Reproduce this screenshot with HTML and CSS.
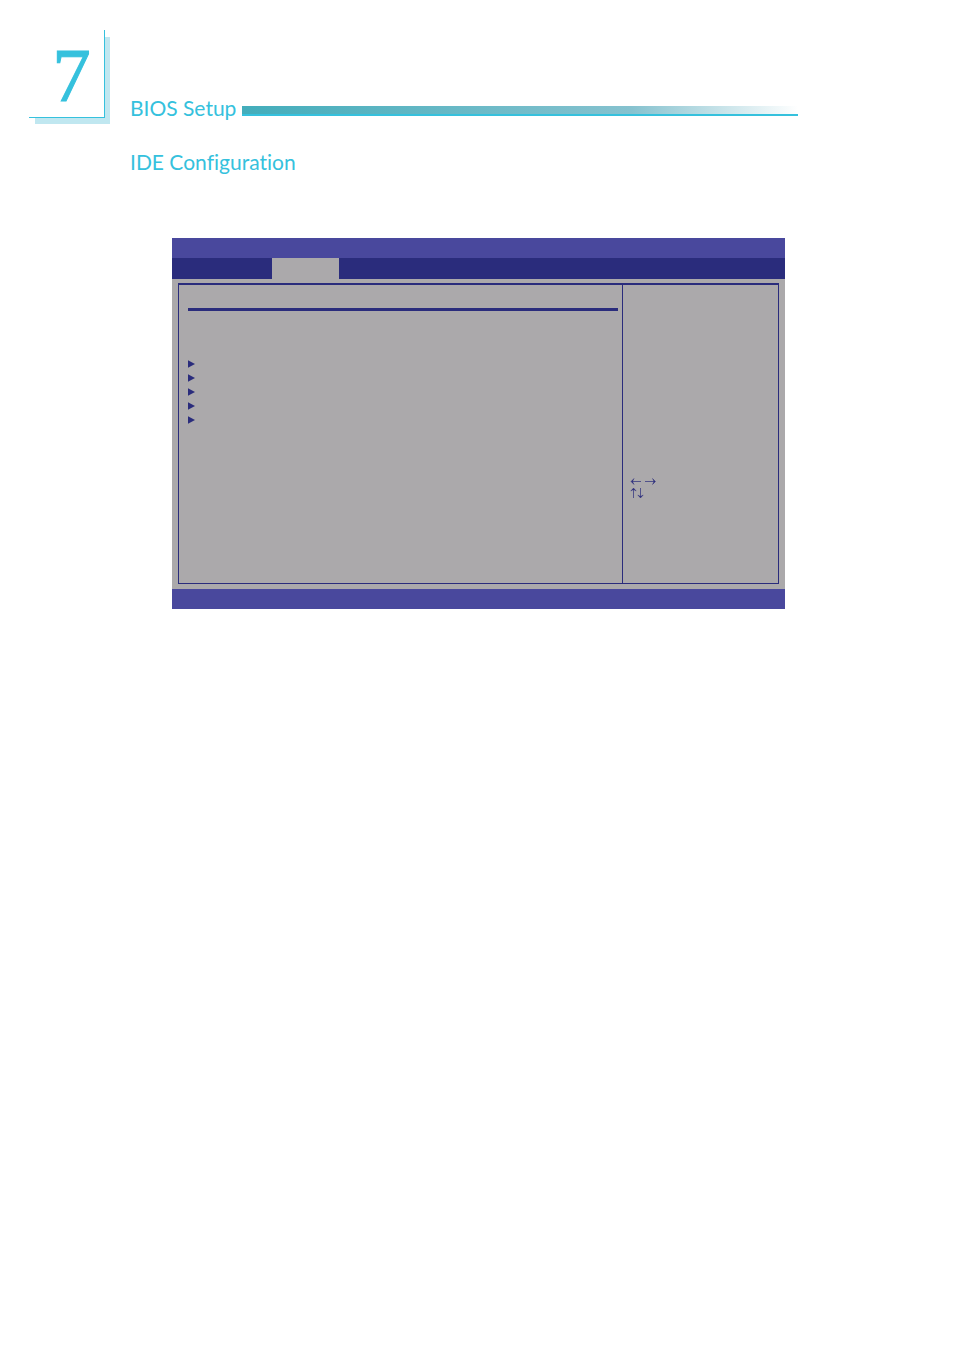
FILE: index.html
```html
<!DOCTYPE html>
<html lang="en">
<head>
<meta charset="utf-8">
<title>BIOS Setup</title>
<link rel="stylesheet" href="styles.css">
</head>
<body>
<header class="page-header">
  <div class="chapter">7</div>
  <div class="running-head">
    <h1 class="heading">BIOS Setup</h1>
    <div class="bar"></div>
  </div>
</header>
<main class="content">
  <h2 class="heading">IDE Configuration</h2>
  <section class="bios">
    <div class="bios-strip"></div>
    <div class="bios-tabs"><div class="tab-active"></div></div>
    <div class="bios-body">
      <div class="frame">
        <div class="options">
          <div class="rule"></div>
          <ul class="markers">
            <li><svg class="marker" viewBox="0 0 7 8"><path d="M0 0.3L7 4L0 7.7Z"/></svg></li>
            <li><svg class="marker" viewBox="0 0 7 8"><path d="M0 0.3L7 4L0 7.7Z"/></svg></li>
            <li><svg class="marker" viewBox="0 0 7 8"><path d="M0 0.3L7 4L0 7.7Z"/></svg></li>
            <li><svg class="marker" viewBox="0 0 7 8"><path d="M0 0.3L7 4L0 7.7Z"/></svg></li>
            <li><svg class="marker" viewBox="0 0 7 8"><path d="M0 0.3L7 4L0 7.7Z"/></svg></li>
          </ul>
        </div>
        <aside class="help">
          <svg class="keys" viewBox="0 0 28 24">
            <path class="shaft" d="M2 5.5H11M15 5.5H24M3.500 13V22M10.500 12V21"/>
            <path class="head" d="M4 2.500L2.500 5.500L4 8.500L1 5.500ZM22.500 2.500L24 5.500L22.500 8.500L25.500 5.500ZM0.800 15L3.500 13.500L6.200 15L3.500 12ZM7.800 19L10.500 20.500L13.200 19L10.500 22Z"/>
          </svg>
        </aside>
      </div>
    </div>
    <div class="bios-strip"></div>
  </section>
</main>
</body>
</html>
```
FILE: styles.css
```css
* {
  box-sizing: border-box;
}

body {
  margin: 0;
  background: #fff;
  color: #35c1dd;
  font-family: "Gill Sans", Lato, sans-serif;
}

.page-header {
  display: flex;
  gap: 25px;
  padding: 30px 156px 0 29px;
}

.chapter {
  position: relative;
  flex: none;
  width: 76px;
  height: 88px;
  padding-left: 10px;
  border-right: 1px solid #35c1dd;
  border-bottom: 1px solid #35c1dd;
  background: #fff;
  font: 77px/90px "Liberation Serif", serif;
  text-align: center;
  -webkit-text-stroke: 1px #35c1dd;
}

.chapter::before,
.chapter::after {
  content: "";
  position: absolute;
  background: #c0e7f0;
}

.chapter::before {
  top: 7px;
  right: -6px;
  bottom: -7px;
  width: 5px;
}

.chapter::after {
  right: -6px;
  bottom: -7px;
  left: 6px;
  height: 6px;
}

.running-head {
  display: flex;
  flex: 1;
  gap: 6px;
  align-items: flex-end;
}

.heading {
  margin: 0;
  font-size: 21px;
  font-weight: 400;
  line-height: 20px;
  font-variant-ligatures: none;
}

.bar {
  flex: 1;
  height: 10px;
  margin-bottom: 2px;
  border-bottom: 2px solid #35c1dd;
  background: linear-gradient(to right, #43adbb, #86c2cf 70%, #fff);
}

.content {
  padding: 34px 169px 0 130px;
}

.bios {
  margin: 66px 0 0 42px;
}

.bios-strip {
  height: 20px;
  background: #49489d;
}

.bios-tabs {
  height: 21px;
  padding-left: 100px;
  background: #2a2c7c;
}

.tab-active {
  width: 67px;
  height: 100%;
  background: #aba9ab;
}

.bios-body {
  padding: 4px 6px 5px;
  background: #aba9ab;
}

.frame {
  display: flex;
  min-height: 301px;
  border: 1px solid #2a2c7c;
  border-top-width: 2px;
}

.options {
  flex: 1;
  padding: 23px 4px 0 9px;
}

.rule {
  height: 3px;
  background: #2a2c7c;
}

.markers {
  margin: 46px 0 0;
  padding: 0;
  list-style: none;
}

.markers li {
  display: flex;
  align-items: center;
  height: 14px;
}

.marker {
  width: 7px;
  height: 8px;
  fill: #2a2c7c;
}

.help {
  width: 156px;
  padding: 191px 7px 0;
  border-left: 1px solid #2a2c7c;
}

.keys {
  display: block;
  width: 28px;
  height: 24px;
}

.shaft {
  fill: none;
  stroke: #2a2c7c;
  stroke-width: 0.7;
}

.head {
  fill: #2a2c7c;
  stroke: #2a2c7c;
  stroke-width: 0.4;
}
```
